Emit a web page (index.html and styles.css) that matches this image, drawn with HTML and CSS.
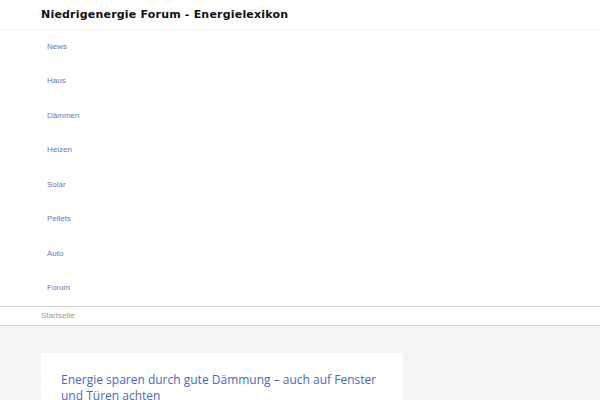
FILE: index.html
```html
<!DOCTYPE html>
<html lang="de">
<head>
<meta charset="utf-8">
<title>Niedrigenergie Forum - Energielexikon</title>
<link rel="stylesheet" href="styles.css">
</head>
<body>
<header class="site-header">
  <div class="wrap">
    <h1 class="site-title">Niedrigenergie Forum - Energielexikon</h1>
  </div>
</header>
<nav class="main-nav">
  <ul class="wrap nav-list">
    <li><a href="#">News</a></li>
    <li><a href="#">Haus</a></li>
    <li><a href="#">Dämmen</a></li>
    <li><a href="#">Heizen</a></li>
    <li><a href="#">Solar</a></li>
    <li><a href="#">Pellets</a></li>
    <li><a href="#">Auto</a></li>
    <li><a href="#">Forum</a></li>
  </ul>
</nav>
<div class="breadcrumb">
  <div class="wrap"><span>Startseite</span></div>
</div>
<main class="content">
  <div class="wrap">
    <article class="card">
      <h2 class="card-title">Energie sparen durch gute Dämmung – auch auf Fenster und Türen achten</h2>
    </article>
  </div>
</main>
</body>
</html>
```
FILE: styles.css
```css
html, body { margin: 0; padding: 0; }
body { background: #f4f4f4; font-family: "DejaVu Sans", sans-serif; }
.wrap { padding-left: 41px; padding-right: 41px; margin: 0; }
.site-header { background: #fff; height: 29px; border-bottom: 1px solid #f5f5f5; display: flex; align-items: center; }
.site-title { margin: 0; font-size: 11px; font-weight: bold; color: #111; letter-spacing: 0.2px; }
.main-nav { background: #fff; }
.nav-list { list-style: none; margin: 0; }
.nav-list li { height: 34.5px; display: flex; align-items: center; padding-left: 6px; }
.nav-list a { font-family: "Liberation Sans", sans-serif; font-size: 8px; line-height: 10px; color: #6a7ab8; text-decoration: none; margin-top: -1px; }
.breadcrumb { background: #fff; border-top: 1px solid #d4d4d4; border-bottom: 1px solid #d4d4d4; height: 18px; box-sizing: content-box; }
.breadcrumb .wrap { padding-top: 4px; }
.breadcrumb span { display: block; font-family: "Liberation Sans", sans-serif; font-size: 8px; line-height: 10px; color: #999; }
.content { padding-top: 27px; }
.card { background: #fff; width: 362px; padding: 19px 18px 20px 20px; box-sizing: border-box; }
.card-title { margin: 0; font-family: "Open Sans", sans-serif; font-weight: 500; font-size: 12px; line-height: 16px; color: #4a68bf; }
```
